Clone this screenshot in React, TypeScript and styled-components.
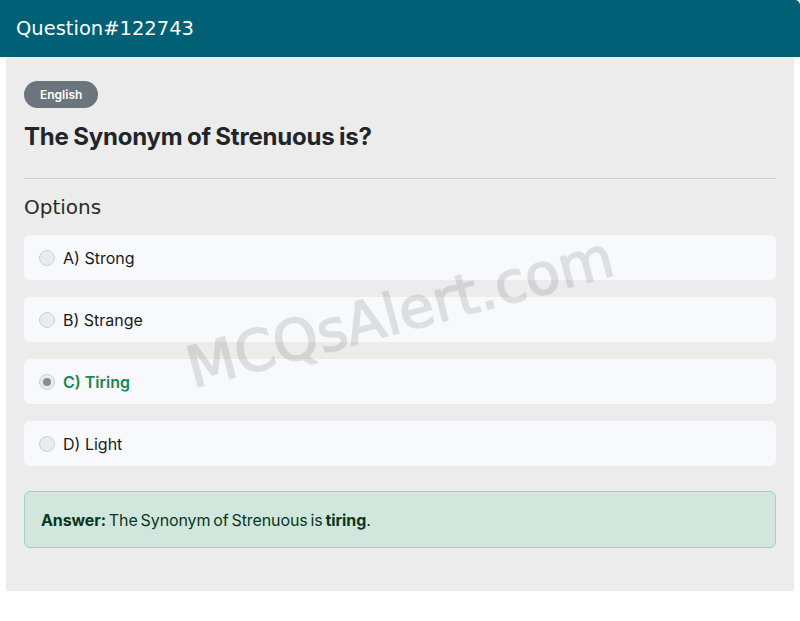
import React from "react";
import styled, { createGlobalStyle, css } from "styled-components";

const Global = createGlobalStyle`
  html, body { margin: 0; padding: 0; background: #ffffff; }
  body { font-family: Inter, "Noto Sans", sans-serif; }
  * { box-sizing: border-box; }
`;

const Card = styled.div`
  width: 800px;
  display: flex;
  flex-direction: column;
`;

const Header = styled.header`
  height: 57px;
  background: #006075;
  color: #ffffff;
  border-top-right-radius: 5px;
  display: flex;
  align-items: center;
  padding: 0 16px;
  font-family: "DejaVu Sans", sans-serif;
  font-size: 19.5px;
`;

const Body = styled.main`
  position: relative;
  margin: 0 6px;
  background: #ececec;
  padding: 24px 18px 43px;
  display: flex;
  flex-direction: column;
  overflow: hidden;
`;

const Badge = styled.span`
  align-self: flex-start;
  height: 27px;
  padding: 0 16px;
  border-radius: 14px;
  background: #6c757d;
  color: #ffffff;
  font-size: 12px;
  font-weight: 600;
  display: flex;
  align-items: center;
`;

const Title = styled.h1`
  margin: 13px 0 0;
  font-size: 24px;
  font-weight: 700;
  line-height: 32px;
  color: #212529;
  letter-spacing: -0.2px;
  word-spacing: -1px;
`;

const Rule = styled.hr`
  border: 0;
  border-top: 1px solid #cfcfcf;
  margin: 25px 0 0;
`;

const Section = styled.h2`
  margin: 14px 0 0;
  font-family: "DejaVu Sans", sans-serif;
  font-size: 20px;
  font-weight: 400;
  line-height: 28px;
  color: #2b2b2b;
`;

const OptionList = styled.div`
  margin-top: 14px;
  display: flex;
  flex-direction: column;
  gap: 17px;
`;

const Option = styled.label`
  height: 45px;
  background: #f8f9fc;
  border-radius: 6px;
  display: flex;
  align-items: center;
  gap: 8px;
  padding: 0 15px;
`;

const Radio = styled.span<{ $checked?: boolean }>`
  width: 16px;
  height: 16px;
  border-radius: 50%;
  border: 1px solid #cdd1d5;
  background: #e9ecef;
  display: flex;
  align-items: center;
  justify-content: center;
  ${(p) =>
    p.$checked &&
    css`
      &::after {
        content: "";
        width: 8px;
        height: 8px;
        border-radius: 50%;
        background: #8a8d90;
      }
    `}
`;

const OptionText = styled.span<{ $correct?: boolean }>`
  font-size: 16px;
  color: ${(p) => (p.$correct ? "#198754" : "#1b1b1b")};
  font-weight: ${(p) => (p.$correct ? 600 : 400)};
`;

const AnswerBox = styled.div`
  margin-top: 25px;
  height: 57px;
  background: #d1e7dd;
  border: 1px solid #a3cfbb;
  border-radius: 6px;
  padding: 0 16px;
  display: flex;
  align-items: center;
  font-size: 16px;
  color: #0a3622;
  word-spacing: -1.5px;
  letter-spacing: -0.1px;
`;

const Strong = styled.strong`
  font-weight: 700;
`;

const Watermark = styled.div`
  position: absolute;
  left: 50%;
  top: calc(50% - 12px);
  transform: translate(-50%, -50%) rotate(-15deg);
  font-family: "DejaVu Sans", sans-serif;
  font-size: 57px;
  white-space: nowrap;
  color: #000000;
  -webkit-text-stroke: 1.6px #000000;
  opacity: 0.1;
  pointer-events: none;
  user-select: none;
`;

const options = [
  { key: "A", text: "Strong" },
  { key: "B", text: "Strange" },
  { key: "C", text: "Tiring", correct: true },
  { key: "D", text: "Light" },
];

export default function App() {
  return (
    <>
      <Global />
      <Card>
        <Header>Question#122743</Header>
        <Body>
          <Badge>English</Badge>
          <Title>The Synonym of Strenuous is?</Title>
          <Rule />
          <Section>Options</Section>
          <OptionList>
            {options.map((o) => (
              <Option key={o.key}>
                <Radio $checked={o.correct} />
                <OptionText $correct={o.correct}>
                  {o.key}) {o.text}
                </OptionText>
              </Option>
            ))}
          </OptionList>
          <AnswerBox>
            <span>
              <Strong>Answer:</Strong> The Synonym of Strenuous is <Strong>tiring</Strong>.
            </span>
          </AnswerBox>
          <Watermark>MCQsAlert.com</Watermark>
        </Body>
      </Card>
    </>
  );
}
